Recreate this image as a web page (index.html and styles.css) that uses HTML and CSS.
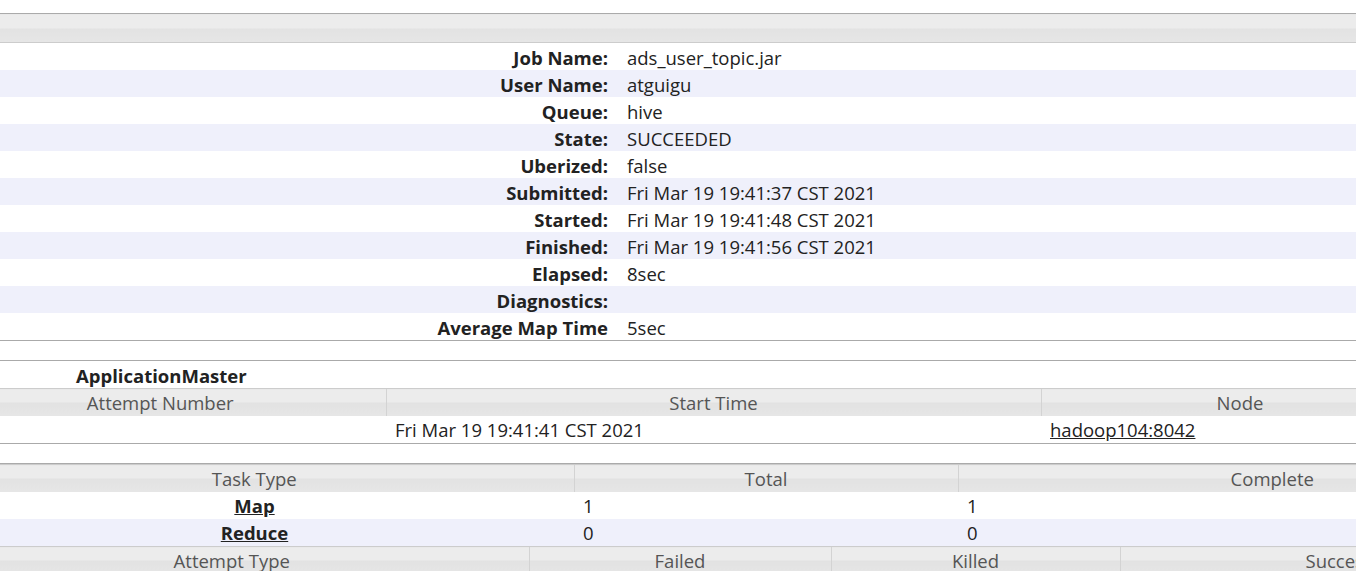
FILE: index.html
```html
<!DOCTYPE html>
<html>
  <head>
    <title>Job job_1616152763061_0001</title>
    <link rel="stylesheet" href="styles.css">
  </head>
  <body>
    <div class="page">
      <div class="content">

        <table class="info">
          <colgroup>
            <col style="width: 677px">
            <col>
          </colgroup>
          <thead>
            <tr><th colspan="2"></th></tr>
          </thead>
          <tbody>
            <tr><th>Job Name:</th><td>ads_user_topic.jar</td></tr>
            <tr class="odd"><th>User Name:</th><td>atguigu</td></tr>
            <tr><th>Queue:</th><td>hive</td></tr>
            <tr class="odd"><th>State:</th><td>SUCCEEDED</td></tr>
            <tr><th>Uberized:</th><td>false</td></tr>
            <tr class="odd"><th>Submitted:</th><td>Fri Mar 19 19:41:37 CST 2021</td></tr>
            <tr><th>Started:</th><td>Fri Mar 19 19:41:48 CST 2021</td></tr>
            <tr class="odd"><th>Finished:</th><td>Fri Mar 19 19:41:56 CST 2021</td></tr>
            <tr><th>Elapsed:</th><td>8sec</td></tr>
            <tr class="odd"><th>Diagnostics:</th><td></td></tr>
            <tr><th>Average Map Time</th><td>5sec</td></tr>
          </tbody>
        </table>

        <div class="am">
          <div class="caption">ApplicationMaster</div>
          <table class="grid">
            <colgroup>
              <col style="width: 451px">
              <col style="width: 655px">
              <col style="width: 398px">
              <col>
            </colgroup>
            <thead>
              <tr><th>Attempt Number</th><th>Start Time</th><th>Node</th><th>Logs</th></tr>
            </thead>
            <tbody>
              <tr>
                <td>1</td>
                <td>Fri Mar 19 19:41:41 CST 2021</td>
                <td><a href="#">hadoop104:8042</a></td>
                <td><a href="#">logs</a></td>
              </tr>
            </tbody>
          </table>
        </div>

        <div class="tasks">
          <table class="grid">
            <colgroup>
              <col style="width: 639px">
              <col style="width: 384px">
              <col style="width: 628px">
            </colgroup>
            <thead>
              <tr><th>Task Type</th><th>Total</th><th>Complete</th></tr>
            </thead>
            <tbody>
              <tr><th class="link"><a href="#">Map</a></th><td>1</td><td>1</td></tr>
              <tr class="odd"><th class="link"><a href="#">Reduce</a></th><td>0</td><td>0</td></tr>
            </tbody>
          </table>
          <table class="grid">
            <colgroup>
              <col style="width: 594px">
              <col style="width: 302px">
              <col style="width: 289px">
              <col style="width: 460px">
            </colgroup>
            <thead>
              <tr><th>Attempt Type</th><th>Failed</th><th>Killed</th><th>Successful</th></tr>
            </thead>
            <tbody>
              <tr><th class="link"><a href="#">Maps</a></th><td>0</td><td>0</td><td>1</td></tr>
              <tr class="odd"><th class="link"><a href="#">Reduces</a></th><td>0</td><td>0</td><td>0</td></tr>
            </tbody>
          </table>
        </div>

      </div>
    </div>
  </body>
</html>
```

FILE: styles.css
```css
body {
  margin: 0;
  background-color: white;
  color: #222;
  font-family: "Open Sans", "Noto Sans", sans-serif;
  font-size: 18.5px;
}
.page {
  width: 100%;
  overflow: hidden;
  padding-top: 13px;
}
.content {
  margin-left: -65px;
  width: 1700px;
}
table {
  border-collapse: collapse;
  table-layout: fixed;
}
a {
  color: #222;
}

/* job overview */
.info {
  width: 1500px;
  border-top: 1px solid #aaa;
  border-bottom: 1px solid #aaa;
}
.info thead th {
  height: 28px;
  padding: 0;
  border-bottom: 1px solid #ccc;
  background: linear-gradient(#ececec 50%, #e2e2e2 50%, #e6e6e6);
}
.info tbody th {
  height: 25px;
  padding: 2px 4px 0 0;
  text-align: right;
  font-weight: bold;
  white-space: nowrap;
}
.info tbody td {
  height: 25px;
  padding: 2px 0 0 15px;
  text-align: left;
  white-space: nowrap;
}
.odd {
  background-color: #eff0fb;
}

/* data grids */
.am {
  margin-top: 19px;
  border-top: 1px solid #aaa;
}
.am .caption {
  height: 27px;
  line-height: 30px;
  padding-left: 141px;
  font-weight: bold;
}
.am .grid {
  border-bottom: 1px solid #aaa;
}
.grid thead th {
  height: 27px;
  padding: 0;
  font-weight: normal;
  color: #555;
  text-align: center;
  white-space: nowrap;
  border-top: 1px solid #ccc;
  border-left: 1px solid #d3d3d3;
  background: linear-gradient(#ececec 50%, #e2e2e2 50%, #e6e6e6);
}
.grid thead th:first-child {
  border-left: none;
}
.grid td {
  height: 27px;
  padding: 0 0 0 9px;
  text-align: left;
  white-space: nowrap;
}
.grid td:first-child {
  padding-left: 12px;
}
.grid th.link {
  height: 26px;
  padding: 0;
  text-align: center;
  font-weight: bold;
}
.tasks {
  margin-top: 19px;
  border-top: 1px solid #aaa;
}
```
